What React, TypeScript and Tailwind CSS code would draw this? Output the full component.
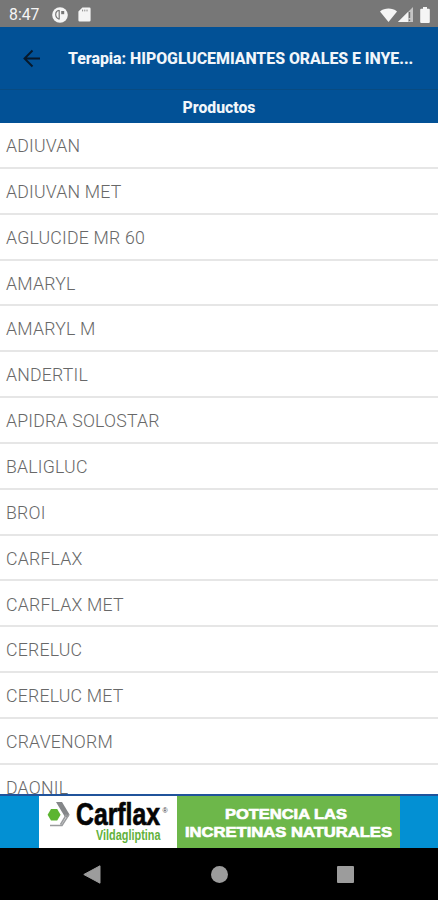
import React from 'react';

const products = [
  'ADIUVAN',
  'ADIUVAN MET',
  'AGLUCIDE MR 60',
  'AMARYL',
  'AMARYL M',
  'ANDERTIL',
  'APIDRA SOLOSTAR',
  'BALIGLUC',
  'BROI',
  'CARFLAX',
  'CARFLAX MET',
  'CERELUC',
  'CERELUC MET',
  'CRAVENORM',
  'DAONIL',
];

const StatusBar: React.FC = () => (
  <div className="flex h-[27px] shrink-0 items-center justify-between bg-[#777777] pl-[9px] pr-[8px] pt-[2px] text-[#f5f5f5]">
    <div className="flex items-center">
      <span className="w-[43px] text-[15.8px] leading-none">8:47</span>
      <svg className="h-4 w-4" viewBox="0 0 16 16">
        <circle cx="8" cy="8" r="7.8" fill="currentColor" />
        <path d="M7.2 3v9.6M7.2 3.4C5 3.6 3.7 5.200 3.7 7.6c0 2 1.200 3.8 3.5 4.600" fill="none" stroke="#777" strokeWidth="1.2" />
        <path d="M9.200 4h3v3.200h-3z" fill="#777" />
      </svg>
      <svg className="ml-[10px] h-[15px] w-[13px]" viewBox="0 0 13 15">
        <path d="M4.4.5h7a1.2 1.2 0 0 1 1.2 1.2v11.6a1.2 1.2 0 0 1-1.2 1.2H1.6a1.2 1.2 0 0 1-1.2-1.2V4.6z" fill="currentColor" />
        <path d="M4.6 2.6v1.8M6.8 2.6v1.8M9 2.6v1.8" stroke="#8a8a8a" strokeWidth="1" />
      </svg>
    </div>
    <div className="flex items-center">
      <svg className="h-[14px] w-[17px]" viewBox="0 0 17 14">
        <path d="M0 3.4C4.8-.4 12.2-.4 17 3.4L8.5 14z" fill="currentColor" />
      </svg>
      <svg className="ml-[1px] h-[15px] w-[15px]" viewBox="0 0 15 15">
        <path d="M15 0v15H0z" fill="#c4c4c4" />
        <path d="M10 5v10H0z" fill="currentColor" />
        <path d="M11.5 5v6M11.5 12.5V14" stroke="#707070" strokeWidth="1.4" />
      </svg>
      <svg className="ml-[7px] h-4 w-[10px]" viewBox="0 0 10 16">
        <path d="M3 0h4v1.7h1.8a1 1 0 0 1 1 1V15a1 1 0 0 1-1 1H1.2a1 1 0 0 1-1-1V2.7a1 1 0 0 1 1-1H3z" fill="currentColor" />
      </svg>
    </div>
  </div>
);

const Header: React.FC = () => (
  <header className="shrink-0 bg-[#025196] text-[#f2f6fa]">
    <div className="flex h-[63px] items-center border-b border-[#084b82] pl-[23px]">
      <button className="h-[19px] w-[18px]">
        <svg className="h-[19px] w-[18px]" viewBox="0 0 18 19" fill="none" stroke="#07192b" strokeWidth="1.9">
          <path d="M17 9.5H1.8M9.5 1.5l-8 8 8 8" />
        </svg>
      </button>
      <h1 className="ml-[27px] whitespace-nowrap pt-[2px] text-[15.9px] font-extrabold leading-5 tracking-[-0.03px]">
        Terapia: HIPOGLUCEMIANTES ORALES E INYE...
      </h1>
    </div>
    <h2 className="flex h-[33px] items-center justify-center pt-[2px] text-[15.8px] font-extrabold leading-none">Productos</h2>
  </header>
);

const CarflaxBanner: React.FC = () => (
  <div className="flex h-[54px] shrink-0 justify-center border-t-2 border-[#20539b] bg-[#0390d3]">
    <div className="h-[52px] w-[138px] bg-white">
      <svg className="h-[52px] w-[138px]" viewBox="0 0 138 52">
        <path d="M12 13h6.2l3.4 5.7-3.4 5.7H12l-3.4-5.7z" fill="#5cb531" />
        <path d="M17 6h6l7.5 12.5L29 21h-3z" fill="#858789" />
        <path d="M30 18.5l-7 11H11M27.5 18.5l-6 10" fill="none" stroke="#9a9c9e" strokeWidth="1.5" />
        <text x="37" y="29" fontFamily="'Liberation Sans Narrow', 'Liberation Sans', sans-serif" fontWeight="700" fontSize="32" fill="#050505" stroke="#050505" strokeWidth=".7" textLength="84" lengthAdjust="spacingAndGlyphs">
          Carflax
        </text>
        <text x="123.5" y="17" fontFamily="'Liberation Sans', sans-serif" fontSize="7" fill="#333">®</text>
        <text x="57" y="43.5" fontFamily="'Liberation Sans Narrow', 'Liberation Sans', sans-serif" fontWeight="700" fontSize="14.5" fill="#62b13b" textLength="64.5" lengthAdjust="spacingAndGlyphs">
          Vildagliptina
        </text>
      </svg>
    </div>
    <div className="h-[52px] w-[223px] bg-[#6db74a]">
      <svg className="h-[52px] w-[223px]" viewBox="0 0 223 52" fontFamily="'Liberation Sans', sans-serif" fontWeight="700" fontSize="15.5" fill="#fff" stroke="#fff" strokeWidth=".7">
        <text x="48" y="23" textLength="122" lengthAdjust="spacingAndGlyphs">POTENCIA LAS</text>
        <text x="8" y="40.5" textLength="207" lengthAdjust="spacingAndGlyphs">INCRETINAS NATURALES</text>
      </svg>
    </div>
  </div>
);

const NavigationBar: React.FC = () => (
  <nav className="flex h-[52px] shrink-0 items-center bg-black pl-[83px]">
    <svg className="h-[19px] w-[18px]" viewBox="0 0 18 19">
      <path d="M17 .8v17.4L.8 9.5z" fill="#9c9c9c" stroke="#9c9c9c" strokeLinejoin="round" />
    </svg>
    <span className="ml-[110px] h-[17px] w-[17px] rounded-full bg-[#9c9c9c]" />
    <span className="ml-[109px] h-[17px] w-[17px] rounded-[1px] bg-[#9c9c9c]" />
  </nav>
);

export default function App() {
  return (
    <div className="flex h-[900px] w-[438px] flex-col overflow-hidden bg-white font-[Roboto,sans-serif]">
      <StatusBar />
      <Header />
      <main className="min-h-0 flex-1 overflow-hidden">
        <ul>
          {products.map((product) => (
            <li
              key={product}
              className="flex h-[45.85px] items-center border-b-2 border-[#e6e6e6] pl-[6px] pt-[4px] text-[17.7px] font-[350] leading-none tracking-[0.2px] text-[#686868]"
            >
              {product}
            </li>
          ))}
        </ul>
      </main>
      <CarflaxBanner />
      <NavigationBar />
    </div>
  );
}
